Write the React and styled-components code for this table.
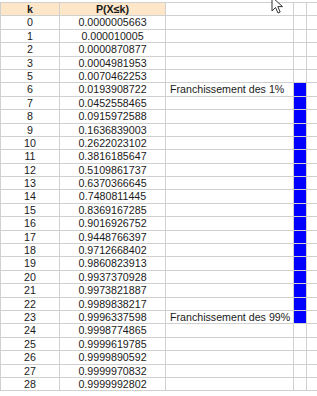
import React from 'react';
import styled, { createGlobalStyle } from 'styled-components';

const GlobalStyle = createGlobalStyle`
  html, body {
    margin: 0;
    padding: 0;
    background: #ffffff;
    overflow: hidden;
  }
  body {
    font-family: "Liberation Sans", Arial, sans-serif;
  }
`;

const Sheet = styled.div`
  position: relative;
  width: 317px;
  height: 396px;
  overflow: hidden;
  padding-top: 2px;
  box-sizing: border-box;
`;

const Grid = styled.div`
  display: grid;
  grid-template-columns: 60px 106px 128px 13px 30px;
  grid-auto-rows: 13.4px;
  border-top: 1px solid #d0d0d0;
  font-size: 8pt;
  color: #1a1a1a;
`;

const Cell = styled.div`
  box-sizing: border-box;
  border-right: 1px solid #d0d0d0;
  border-bottom: 1px solid #d0d0d0;
  border-left: ${(p) => (p.$first ? '1px solid #d0d0d0' : 'none')};
  background: ${(p) => p.$bg || 'transparent'};
  font-weight: ${(p) => (p.$bold ? 700 : 400)};
  text-align: ${(p) => p.$align || 'center'};
  padding: ${(p) => (p.$align === 'left' ? '0 0 0 4px' : '0')};
  line-height: 12.4px;
  white-space: nowrap;
  overflow: visible;
`;

const Cursor = styled.svg`
  position: absolute;
  left: 271px;
  top: -4px;
`;

const rows = [
  [0, '0.0000005663'],
  [1, '0.000010005'],
  [2, '0.0000870877'],
  [3, '0.0004981953'],
  [5, '0.0070462253'],
  [6, '0.0193908722', 'Franchissement des 1%'],
  [7, '0.0452558465'],
  [8, '0.0915972588'],
  [9, '0.1636839003'],
  [10, '0.2622023102'],
  [11, '0.3816185647'],
  [12, '0.5109861737'],
  [13, '0.6370366645'],
  [14, '0.7480811445'],
  [15, '0.8369167285'],
  [16, '0.9016926752'],
  [17, '0.9448766397'],
  [18, '0.9712668402'],
  [19, '0.9860823913'],
  [20, '0.9937370928'],
  [21, '0.9973821887'],
  [22, '0.9989838217'],
  [23, '0.9996337598', 'Franchissement des 99%'],
  [24, '0.9998774865'],
  [25, '0.9999619785'],
  [26, '0.9999890592'],
  [27, '0.9999970832'],
  [28, '0.9999992802'],
];

const HEADER = '#fde7c8';
const BLUE = '#0000ff';

export default function App() {
  return (
    <Sheet>
      <GlobalStyle />
      <Grid>
        <Cell $first $bold $bg={HEADER}>k</Cell>
        <Cell $bold $bg={HEADER}>P(X≤k)</Cell>
        <Cell />
        <Cell />
        <Cell />
        {rows.map(([k, p, label]) => (
          <React.Fragment key={k}>
            <Cell $first>{k}</Cell>
            <Cell>{p}</Cell>
            <Cell $align="left">{label || ''}</Cell>
            <Cell $bg={k >= 6 && k <= 23 ? BLUE : undefined} />
            <Cell />
          </React.Fragment>
        ))}
      </Grid>
      <Cursor width="14" height="20" viewBox="0 0 14 20">
        <path
          d="M1 1 L1 15 L4.5 11.5 L7 17 L9.2 16 L6.8 10.6 L11.5 10.6 Z"
          fill="#ffffff"
          stroke="#333333"
          strokeWidth="1"
          strokeLinejoin="round"
        />
      </Cursor>
    </Sheet>
  );
}
